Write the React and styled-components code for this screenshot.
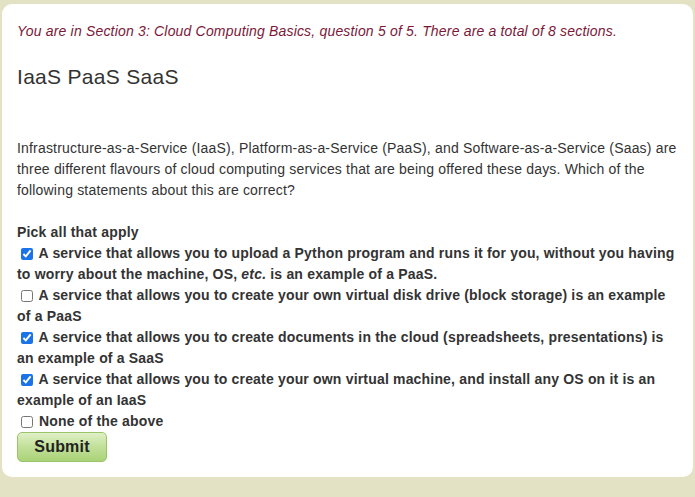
import React from "react";
import styled, { createGlobalStyle } from "styled-components";

const GlobalStyle = createGlobalStyle`
    html, body {
        margin: 0;
        padding: 0;
        background: #e3e2c5;
    }
    body {
        font-family: "Liberation Sans", Arial, sans-serif;
        font-size: 14px;
        letter-spacing: 0.18px;
        color: #333;
    }
`;

const options = [
    {
        id: 1,
        checked: true,
        text: (
            <>
                A service that allows you to upload a Python program and runs
                it for you, without you having to worry about the machine, OS,{" "}
                <em>etc.</em> is an example of a PaaS.
            </>
        ),
    },
    {
        id: 2,
        checked: false,
        text: "A service that allows you to create your own virtual disk drive (block storage) is an example of a PaaS",
    },
    {
        id: 3,
        checked: true,
        text: "A service that allows you to create documents in the cloud (spreadsheets, presentations) is an example of a SaaS",
    },
    {
        id: 4,
        checked: true,
        text: "A service that allows you to create your own virtual machine, and install any OS on it is an example of an IaaS",
    },
    { id: 5, checked: false, text: "None of the above" },
];

function App() {
    return (
        <>
            <GlobalStyle />
            <Page>
                <Card>
                    <Location>
                        You are in Section 3: Cloud Computing Basics, question
                        5 of 5. There are a total of 8 sections.
                    </Location>
                    <Heading>IaaS PaaS SaaS</Heading>
                    <Question>
                        Infrastructure-as-a-Service (IaaS),
                        Platform-as-a-Service (PaaS), and Software-as-a-Service
                        (Saas) are three different flavours of cloud computing
                        services that are being offered these days. Which of
                        the following statements about this are correct?
                    </Question>
                    <Form onSubmit={(e) => e.preventDefault()}>
                        <Pick>Pick all that apply</Pick>
                        {options.map((item) => (
                            <Option key={item.id}>
                                <Check
                                    type="checkbox"
                                    defaultChecked={item.checked}
                                />{" "}
                                {item.text}
                            </Option>
                        ))}
                        <Submit type="submit">Submit</Submit>
                    </Form>
                </Card>
            </Page>
        </>
    );
}

export default App;

const Page = styled.div`
    padding: 4px 2px 21px 2px;
`;
const Card = styled.div`
    background: #fff;
    border-radius: 10px;
    padding: 15px 15px 15px 15px;
`;
const Location = styled.p`
    margin: 0;
    font-style: italic;
    color: #7b1838;
    line-height: 24px;
`;
const Heading = styled.h2`
    margin: 19px 0 0 0;
    font-weight: normal;
    font-size: 21px;
    letter-spacing: 0.3px;
    line-height: 30px;
    color: #333;
`;
const Question = styled.p`
    margin: 46px 0 0 0;
    line-height: 21px;
`;
const Form = styled.form`
    margin-top: 21px;
    font-weight: bold;
    line-height: 21px;
`;
const Pick = styled.div``;
const Option = styled.div``;
const Check = styled.input`
    margin: 3px 2px 3px 4px;
    width: 12px;
    height: 12px;
    vertical-align: -2px;
    accent-color: #1a73e8;
`;
const Submit = styled.button`
    display: block;
    margin-top: 0;
    width: 90px;
    height: 30px;
    border: 1px solid #9ac46a;
    border-radius: 5px;
    background: linear-gradient(#e0f0c8 0%, #c4e19c 45%, #aad378 100%);
    font-family: "Liberation Sans", Arial, sans-serif;
    font-weight: bold;
    font-size: 16px;
    letter-spacing: 0.2px;
    color: #222;
    cursor: pointer;
`;
